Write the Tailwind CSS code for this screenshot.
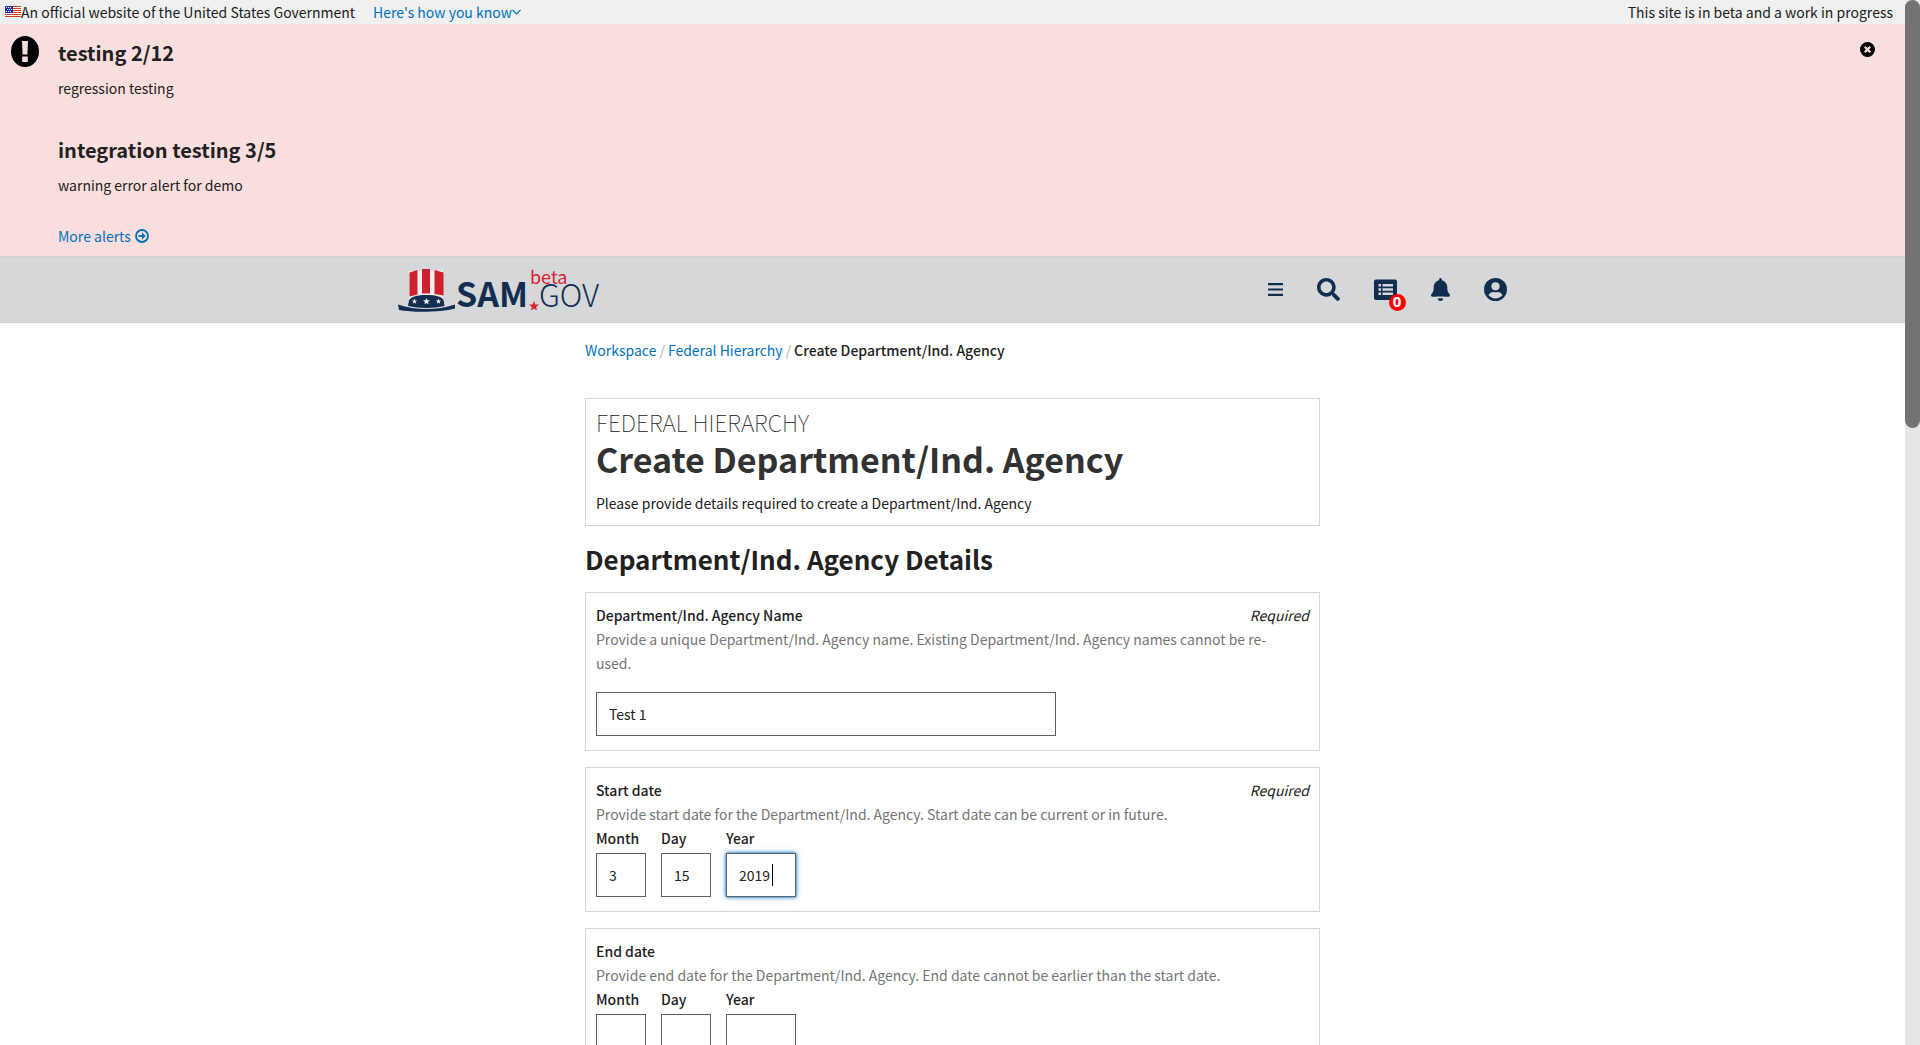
<!DOCTYPE html>
<html lang="en">
<head>
<meta charset="utf-8">
<title>Create Department/Ind. Agency</title>
<script src="https://cdn.jsdelivr.net/npm/@tailwindcss/browser@4"></script>
</head>
<body class="flex h-screen overflow-hidden bg-white font-['Noto_Sans_CJK_SC',sans-serif] text-[14px] leading-6 text-[#212121]">
<div class="h-full min-w-0 flex-1 overflow-hidden">

  <!-- Government banner -->
  <div class="flex h-6 items-center justify-between bg-[#f0f0f0] pr-3 pl-[5px]">
    <div class="flex items-center">
      <svg class="h-3 w-4" viewBox="0 0 16 12" shape-rendering="crispEdges">
        <path fill="#fff" d="M0 0h16v12H0z"/>
        <path fill="#db3e1f" d="M0 0h16v1H0zM0 2h16v1H0zM0 4h16v1H0zM0 6h16v1H0zM0 8h16v1H0zM0 10h16v1H0z"/>
        <path fill="#1e33b1" d="M0 0h8v7H0z"/>
        <path fill="#fff" d="M1 1h1v1H1zM3 1h1v1H3zM5 1h1v1H5zM2 3h1v1H2zM4 3h1v1H4zM6 3h1v1H6zM1 5h1v1H1zM3 5h1v1H3zM5 5h1v1H5z"/>
      </svg>
      <span>An official website of the United States Government</span>
      <button class="ml-[18px] flex items-center text-[#0071bc]">Here's how you know
        <svg class="h-3 w-[9px]" viewBox="0 0 9 12" fill="none" stroke="currentColor" stroke-width="1.2"><path d="M.5 4l4 4 4-4"/></svg>
      </button>
    </div>
    <span>This site is in beta and a work in progress</span>
  </div>

  <!-- Alerts -->
  <section class="flex h-[232px] items-start bg-[#f9dede] pt-4 pr-[30px] pb-2 pl-[11px]">
    <svg class="-mt-1 h-8 w-[28px] shrink-0" viewBox="0 0 30 32" preserveAspectRatio="none"><ellipse cx="15" cy="15.500" rx="15" ry="15.500" fill="#000"/><path fill="#f9dede" d="M11.800 5h6.400l-.6 13.500h-5.200zM12 20.500h6v5.500h-6z"/></svg>
    <div class="ml-[19px] flex-1">
      <h2 class="text-[20px] leading-[26px] font-bold">testing 2/12</h2>
      <p class="mt-[10px]">regression testing</p>
      <h2 class="mt-[37px] text-[20px] leading-[26px] font-bold">integration testing 3/5</h2>
      <p class="mt-[10px]">warning error alert for demo</p>
      <a href="#" class="mt-[27px] inline-flex items-center gap-1 text-[#0071bc]">More alerts
        <svg class="h-[14px] w-[14px]" viewBox="0 0 14 14" fill="none" stroke="currentColor" stroke-width="1.800"><circle cx="7" cy="7" r="6"/><path d="M3.500 7h5"/><path d="M7 3.500L10.800 7 7 10.500z" fill="currentColor" stroke="none"/></svg>
      </a>
    </div>
    <button aria-label="Close alerts" class="mt-[2px]">
      <svg class="h-[15px] w-[15px]" viewBox="0 0 15 15"><circle cx="7.500" cy="7.500" r="7.500"/><path d="M4.800 4.800l5.400 5.400m0-5.400l-5.400 5.400" stroke="#f9dede" stroke-width="2.300"/></svg>
    </button>
  </section>

  <!-- Site header -->
  <header class="h-[67px] border-y border-[#d0d1d2] bg-[#d6d7d9]">
    <div class="mx-auto flex h-full w-full max-w-[1170px] items-center justify-between pr-[31px] pl-[30px]">
      <a href="#" aria-label="SAM.gov beta">
        <svg class="h-[46px] w-[204px] overflow-visible" viewBox="0 0 204 46">
          <path fill="#fff" d="M11 4l34-1v30H11z" opacity=".6"/>
          <path fill="#cf202f" d="M11.500 5.500l8-2.500v24.500l-8 2zM24 2h8v24.500h-8zM36.500 3l9 2.500v23l-9-1.500z"/>
          <path fill="#112e51" d="M11 33.500c1-3 6-5.500 17-5.500s16 2 17.500 5l1 6c-11 2.500-25 2.500-36.500 0z"/>
          <path fill="#112e51" d="M0 37.500c18 6 39 6 57 0v4c-13 3.500-40 4.500-56 1.500z"/>
          <g fill="#fff">
            <path d="M28.500 31l.9 2.300 2.500.1-2 1.500.7 2.400-2.100-1.400-2.100 1.400.7-2.400-2-1.500 2.500-.1z"/>
            <path d="M16.500 31.500l.7 1.900 2 .1-1.600 1.200.6 2-1.700-1.200-1.700 1.200.6-2-1.600-1.200 2-.1z"/>
            <path d="M40.500 31.500l.7 1.900 2 .1-1.600 1.200.6 2-1.700-1.200-1.700 1.200.6-2-1.600-1.200 2-.1z"/>
          </g>
          <text x="58" y="40" fill="#112e51" font-family="'Noto Sans CJK SC',sans-serif" font-size="34" font-weight="700">SAM</text>
          <text x="132" y="17" fill="#d9202f" font-family="'Noto Sans CJK SC',sans-serif" font-size="18">beta</text>
          <path fill="#d9202f" d="M136 34l1.300 3.400 3.700.2-2.900 2.300 1 3.600-3.100-2-3.100 2 1-3.600-2.900-2.300 3.700-.2z"/>
          <text x="141" y="40" fill="#112e51" font-family="'Noto Sans CJK SC',sans-serif" font-size="31" font-weight="300">GOV</text>
        </svg>
      </a>
      <nav class="flex items-center gap-[34px] text-[#112e51]">
        <button aria-label="Menu"><svg class="h-[15px] w-[15px]" viewBox="0 0 15 15" fill="currentColor"><path d="M0 1h15v2.200H0zM0 6.400h15v2.200H0zM0 11.800h15V14H0z"/></svg></button>
        <button aria-label="Search"><svg class="h-[23px] w-[23px]" viewBox="0 0 512 512" fill="currentColor"><path d="M505 442.700L405.300 343c-4.500-4.500-10.600-7-17-7H372c27.600-35.300 44-79.700 44-128C416 93.100 322.900 0 208 0S0 93.100 0 208s93.100 208 208 208c48.300 0 92.700-16.400 128-44v16.300c0 6.400 2.500 12.500 7 17l99.700 99.700c9.400 9.400 24.600 9.400 33.900 0l28.300-28.300c9.400-9.400 9.400-24.600.1-34zM208 336c-70.700 0-128-57.200-128-128 0-70.700 57.200-128 128-128 70.700 0 128 57.200 128 128 0 70.700-57.200 128-128 128z"/></svg></button>
        <button aria-label="Requests" class="relative">
          <svg class="h-[23px] w-[23px]" viewBox="0 0 23 23"><rect y="1.500" width="23" height="20.500" rx="2" fill="currentColor"/><path d="M4.500 7.200H7m1.500 0H19M4.500 11.500H7m1.500 0H19M4.500 15.800H7m1.500 0H19" stroke="#d6d7d9" stroke-width="2.400"/></svg>
          <span class="absolute -right-[9px] -bottom-[10px] h-[17px] w-[17px] rounded-full bg-[#f00] text-center font-['Noto_Sans',sans-serif] text-[15px] leading-[14px] font-bold text-white">0</span>
        </button>
        <button aria-label="Notifications"><svg class="h-[23px] w-[19px]" viewBox="0 0 448 512" preserveAspectRatio="none" fill="currentColor"><path d="M224 512c35.320 0 63.970-28.650 63.970-64H160.030c0 35.350 28.650 64 63.970 64zm215.390-149.710c-19.320-20.760-55.470-51.990-55.470-154.290 0-77.700-54.480-139.900-127.940-155.160V32c0-17.670-14.320-32-31.980-32s-31.980 14.330-31.980 32v20.840C118.560 68.100 64.080 130.300 64.080 208c0 102.300-36.150 133.530-55.470 154.290-6 6.450-8.660 14.160-8.610 21.710.11 16.400 12.980 32 32.100 32h383.800c19.120 0 32-15.600 32.100-32 .05-7.550-2.610-15.270-8.610-21.710z"/><path d="M130 416h188v32H130z" fill="#d6d7d9"/></svg></button>
        <button aria-label="Account"><svg class="h-[23px] w-[23px]" viewBox="0 0 23 23"><circle cx="11.500" cy="11.500" r="11.500" fill="currentColor"/><circle cx="11.500" cy="8.300" r="4.100" fill="#d6d7d9"/><path fill="#d6d7d9" d="M4.500 17.300c1.200-2.400 3-3.400 4.700-3.400 1.500.6 3.100.6 4.600 0 1.700 0 3.500 1 4.700 3.400-3.600 4.100-10.400 4.100-14 0z"/></svg></button>
      </nav>
    </div>
  </header>

  <main class="mx-auto w-full max-w-[735px] pt-[15px]">
    <nav aria-label="Breadcrumb" class="flex gap-[3px]">
      <a href="#" class="text-[#0071bc]">Workspace</a><span class="text-[#aeb0b5]">/</span>
      <a href="#" class="text-[#0071bc]">Federal Hierarchy</a><span class="text-[#aeb0b5]">/</span>
      <span class="font-medium">Create Department/Ind. Agency</span>
    </nav>

    <div class="mt-9 border border-[#d6d7d9] px-[10px] pt-[11px] pb-[10px]">
      <p class="text-[23px] font-thin uppercase">Federal Hierarchy</p>
      <h1 class="text-[34px] leading-[50px] font-bold text-[#323232]">Create Department/Ind. Agency</h1>
      <p class="mt-[7px]">Please provide details required to create a Department/Ind. Agency</p>
    </div>

    <h2 class="mt-[15px] text-[26px] leading-9 font-bold">Department/Ind. Agency Details</h2>

    <form class="mt-[15px] flex flex-col gap-4">
      <div class="border border-[#d6d7d9] px-[10px] pt-[10px] pb-[14px]">
        <div class="flex justify-between"><label for="name" class="font-medium">Department/Ind. Agency Name</label><span class="italic">Required</span></div>
        <p class="text-[#757575]">Provide a unique Department/Ind. Agency name. Existing Department/Ind. Agency names cannot be re-<br>used.</p>
        <input id="name" type="text" value="Test 1" class="mt-[17px] block h-11 w-full max-w-[460px] border border-[#5b616b] px-3">
      </div>

      <fieldset class="border border-[#d6d7d9] px-[10px] pt-[10px] pb-[14px]">
        <div class="flex justify-between"><span class="font-medium">Start date</span><span class="italic">Required</span></div>
        <p class="text-[#757575]">Provide start date for the Department/Ind. Agency. Start date can be current or in future.</p>
        <div class="flex gap-[15px]">
          <div><label for="sm" class="block font-medium">Month</label><input id="sm" type="text" value="3" class="mt-[3px] block h-11 w-[50px] border border-[#5b616b] px-3"></div>
          <div><label for="sd" class="block font-medium">Day</label><input id="sd" type="text" value="15" class="mt-[3px] block h-11 w-[50px] border border-[#5b616b] px-3"></div>
          <div class="relative"><label for="sy" class="block font-medium">Year</label><input id="sy" type="text" value="2019" class="mt-[3px] block h-11 w-[70px] border border-[#5b616b] px-3 caret-transparent shadow-[0_0_3px_#0071bc,0_0_6px_#0071bc80] outline-none"><span class="absolute right-[23px] bottom-[11px] h-[22px] w-px bg-black"></span></div>
        </div>
      </fieldset>

      <fieldset class="border border-[#d6d7d9] px-[10px] pt-[10px] pb-[14px]">
        <div><span class="font-medium">End date</span></div>
        <p class="text-[#757575]">Provide end date for the Department/Ind. Agency. End date cannot be earlier than the start date.</p>
        <div class="flex gap-[15px]">
          <div><label for="em" class="block font-medium">Month</label><input id="em" type="text" class="mt-[3px] block h-11 w-[50px] border border-[#5b616b] px-3"></div>
          <div><label for="ed" class="block font-medium">Day</label><input id="ed" type="text" class="mt-[3px] block h-11 w-[50px] border border-[#5b616b] px-3"></div>
          <div><label for="ey" class="block font-medium">Year</label><input id="ey" type="text" class="mt-[3px] block h-11 w-[70px] border border-[#5b616b] px-3"></div>
        </div>
      </fieldset>
    </form>
  </main>
</div>

<!-- Scrollbar -->
<div class="h-full w-[15px] shrink-0 bg-[#e6e6e6]"><div class="h-[41%] rounded-full bg-[#737373]"></div></div>
</body>
</html>
